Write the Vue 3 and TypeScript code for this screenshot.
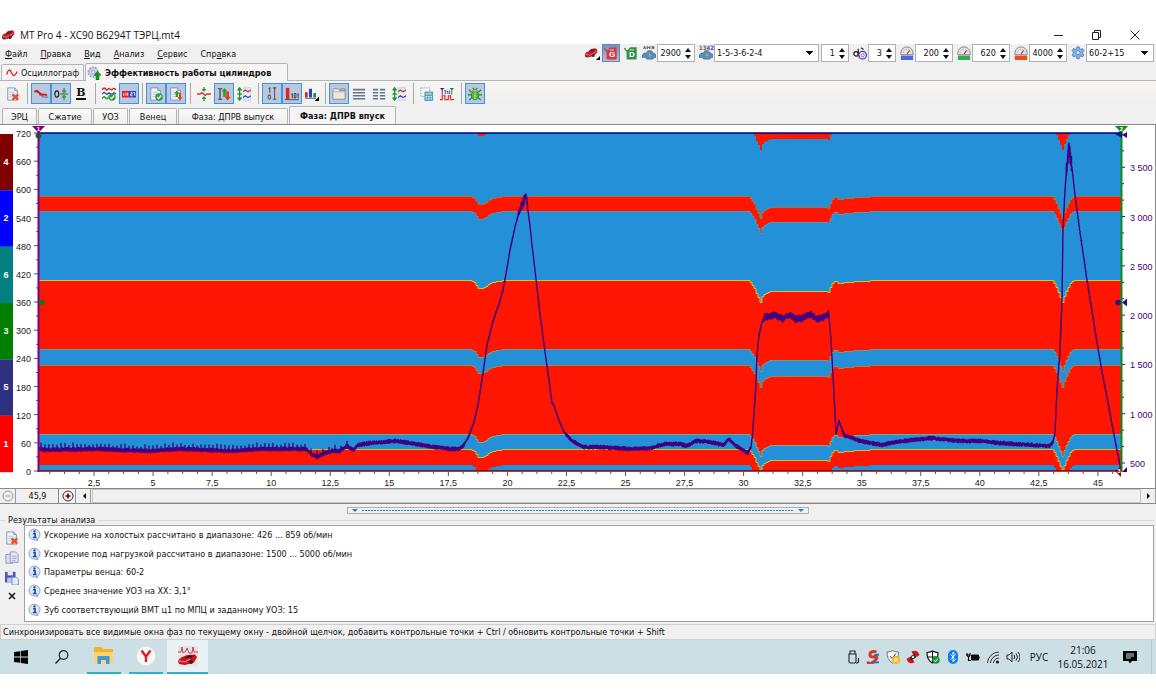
<script setup lang="ts">
import { ref } from 'vue'

type Tool = { icon: string; on?: boolean; label: string }

const menu = [
  ['', 'Ф', 'айл'],
  ['', 'П', 'равка'],
  ['', 'В', 'ид'],
  ['', 'А', 'нализ'],
  ['', 'С', 'ервис'],
  ['Спр', 'а', 'вка'],
]

const toolGroups: Tool[][] = [
  [{ icon: 'pagex', label: 'Удалить' }],
  [
    { icon: 'wave', on: true, label: 'Сигнал' },
    { icon: 'zero', on: true, label: 'Ноль' },
    { icon: 'bold', label: 'Жирный' },
  ],
  [
    { icon: 'waves', label: 'Сигналы' },
    { icon: 'digits', on: true, label: 'Номера' },
  ],
  [
    { icon: 'pageok', on: true, label: 'Проверить' },
    { icon: 'pageud', on: true, label: 'Обновить' },
  ],
  [
    { icon: 'fit', label: 'Вписать' },
    { icon: 'range', on: true, label: 'Диапазон' },
    { icon: 'scale', label: 'Масштаб' },
  ],
  [
    { icon: 'binary', on: true, label: 'Фазы' },
    { icon: 'barnum', on: true, label: 'Значения' },
    { icon: 'bars', label: 'Диаграмма' },
  ],
  [
    { icon: 'tab', on: true, label: 'Вкладки' },
    { icon: 'rows', label: 'Строки' },
    { icon: 'cols', label: 'Столбцы' },
    { icon: 'scale', label: 'Высота' },
  ],
  [
    { icon: 'calc', label: 'Расчёт' },
    { icon: 'pulse', label: 'Импульсы' },
  ],
  [{ icon: 'bug', on: true, label: 'Отладка' }],
]

const rpm = ref('2900')
const order = ref('1-5-3-6-2-4')
const first = ref('1')
const third = ref('3')
const low = ref('200')
const idle = ref('620')
const high = ref('4000')
const wheel = ref('60-2+15')

const phaseTabs = ['ЭРЦ', 'Сжатие', 'УОЗ', 'Венец', 'Фаза: ДПРВ выпуск', 'Фаза: ДПРВ впуск']

const results = [
  'Ускорение на холостых рассчитано в диапазоне: 426 ... 859 об/мин',
  'Ускорение под нагрузкой рассчитано в диапазоне: 1500 ... 5000 об/мин',
  'Параметры венца: 60-2',
  'Среднее значение УОЗ на ХХ: 3,1°',
  'Зуб соответствующий ВМТ ц1 по МПЦ и заданному УОЗ: 15',
]

/* ---------- chart geometry ---------- */
const L = 38
const R = 1121
const T = 133
const B = 471
const cylinders = [
  { n: 4, c: '#800000' },
  { n: 2, c: '#0000ff' },
  { n: 6, c: '#008080' },
  { n: 3, c: '#008000' },
  { n: 5, c: '#303080' },
  { n: 1, c: '#ff0000' },
].map((c, i) => ({ ...c, y: T + 1 + (i * (B - T)) / 6 }))

const degY = (d: number) => B - (d * (B - T)) / 720
const degTicks = Array.from({ length: 25 }, (_, i) => ({ v: i * 30, y: degY(i * 30), major: i % 2 === 0 }))
const timeX = (t: number) => 35 + t * 23.62
const timeTicks = Array.from({ length: 73 }, (_, i) => ({
  x: timeX((i + 1) * 0.625),
  major: (i + 1) % 4 === 0,
  text: String(((i + 1) * 0.625).toFixed(1)).replace('.0', '').replace('.', ','),
}))
const rpmTicks = Array.from({ length: 21 }, (_, i) => ({
  y: 463 - i * 16.43,
  major: i % 3 === 0,
  text: String(500 + (i / 3) * 500).replace(/(\d)(\d{3})$/, '$1 $2'),
}))

type P = [number, number]
function lerp(pts: P[], x: number): number {
  if (x <= pts[0][0]) return pts[0][1]
  for (let i = 1; i < pts.length; i++) {
    if (x <= pts[i][0]) {
      const [x0, y0] = pts[i - 1]
      const [x1, y1] = pts[i]
      return y0 + ((y1 - y0) * (x - x0)) / (x1 - x0)
    }
  }
  return pts[pts.length - 1][1]
}

const shift: P[] = [
  [38, 0], [471, 0], [475, 3], [478, 8], [483, 7.5], [487, 5], [492, 2], [497, 1], [504, 0],
  [749, 0], [751, 4], [753.5, 7], [755.5, 12], [758, 17], [760, 21.5], [762, 16], [764, 13.5], [767, 12], [771, 11],
  [828, 11.5], [829.5, 8], [831, 4], [833.5, 1], [836, 0.5], [838, 3], [842, 3], [844, 1.7], [852, 1.5], [867, 0.6], [880, 0],
  [1052, 0], [1054, 3], [1056, 7], [1058, 12], [1060, 17], [1062, 21.5], [1064, 16], [1067, 9], [1070, 3], [1073, 0],
  [1121, 0],
]
const steps: P[] = []
for (let x = L; x < R; x += 2) steps.push([x, Math.round(lerp(shift, x))])

function edge(base: number): string[] {
  const out: string[] = []
  for (const [x, d] of steps) {
    out.push(`${x},${base + d}`, `${Math.min(x + 2, R)},${base + d}`)
  }
  return out
}
const bandPath = (a: number, b: number) => `M${edge(a).join('L')}L${edge(b).reverse().join('L')}Z`
const bands = [
  bandPath(90, 128),
  bandPath(197, 211),
  bandPath(281, 350),
  bandPath(365, 434),
  bandPath(450, 465),
]
const rims = [
  { y: 196.5, c: '#a8743e' },
  { y: 211.5, c: '#5a94b0' },
  { y: 280.5, c: '#c2cf2a' },
  { y: 349.5, c: '#6d9a8c' },
  { y: 365.5, c: '#b87a3a' },
  { y: 434.5, c: '#6fb08c' },
  { y: 449.5, c: '#c9c22c' },
].map((r) => ({ c: r.c, d: `M${edge(r.y).join('L')}` }))

const speed: P[] = [
  [38, 448], [45, 450], [100, 449], [120, 450], [150, 451], [180, 449], [230, 451], [260, 449], [306, 449], [311, 454],
  [317, 457], [325, 453], [332, 451], [340, 451], [347, 446], [353, 450], [358, 445], [370, 443], [396, 441], [410, 443],
  [434, 447], [450, 449], [459, 449], [463, 446], [468, 438], [474, 422], [478, 405], [483, 373], [487, 345], [493, 321],
  [499, 304], [503, 290], [507, 268], [510, 250], [515, 227], [519, 212], [522, 205], [526, 195], [527, 203], [530, 226],
  [532, 245], [536, 279], [540, 314], [545, 352], [549, 380], [552, 403], [554, 405], [558, 418], [564, 432], [571, 440],
  [583, 447], [600, 447], [630, 449], [650, 448], [665, 444], [680, 444], [687, 446], [696, 441], [710, 442], [723, 445],
  [729, 439], [736, 446], [748, 453], [751, 447], [752.5, 435], [755.5, 392], [757, 355], [759, 335], [762, 322], [765, 317],
  [776, 315], [783, 319], [789, 315], [796, 319], [803, 318], [810, 314], [817, 319], [827, 316], [828.5, 311], [831, 340],
  [833, 375], [836, 433], [839, 421], [844, 435], [860, 441], [882, 445], [895, 442], [930, 438], [960, 441], [980, 441],
  [1000, 443], [1049, 446], [1053, 442], [1055, 432], [1057, 390], [1060, 350], [1062, 300], [1063, 230], [1065, 190],
  [1067, 164], [1069, 148], [1072, 168], [1075, 195], [1080, 232], [1087, 280], [1095, 330], [1102, 372], [1109, 408],
  [1115, 440], [1121, 470],
]
let seed = 7
const rnd = () => {
  seed = (seed * 16807) % 2147483647
  return seed / 2147483647 - 0.5
}
function amp(x: number): number {
  if (x > 764 && x < 828) return 3
  if (x > 1066 && x < 1072) return 7
  if (x > 518 && x < 528) return 4
  if ((x > 464 && x < 566) || (x > 750 && x < 764) || (x >= 828 && x < 842)) return 0.8
  if (x > 1054) return 1.5
  return 1.6
}
/* every half-pixel column is drawn as a short vertical sweep, which gives the trace its thickness */
const curvePts: string[] = []
for (let x = 39; x <= R; x += 0.5) {
  const k = Math.round((x - 39) * 2)
  const y = lerp(speed, x)
  const a = amp(x)
  const up = y - a * (0.7 + rnd())
  const down = y + a * (0.7 + rnd())
  curvePts.push(`${x},${up.toFixed(1)}`, `${x},${down.toFixed(1)}`)
  if ((x < 308 && k % 8 === 4) || (x > 308 && x < 350 && k % 12 === 4)) {
    curvePts.push(`${x},${(y - 5 - rnd() * 3).toFixed(1)}`, `${x},${y.toFixed(1)}`)
  }
}
const curve = 'M' + curvePts.join('L')
</script>

<template>
  <svg class="defs" aria-hidden="true">
    <symbol id="i-car" viewBox="0 0 16 16">
      <path d="M1 9.500l1.500-2.500 3-1L8 3.500l5-.8 2 1.300.3 3-3.800 4.500L4 13 1 12z" fill="#c4202a" />
      <path d="M5 6.500L8 4l4.500-.6-2 2.800z" fill="#57222c" />
      <path d="M1.500 9.500l5 1 3.500-2 4.500-2.500" fill="none" stroke="#f08a88" stroke-width=".8" />
      <circle cx="10.500" cy="11" r="1.600" fill="#333" /><circle cx="3" cy="12" r="1.100" fill="#444" />
    </symbol>
    <symbol id="i-sine" viewBox="0 0 16 16"><path d="M1 10C3 3 5 2 7 7s4 7 8-1" fill="none" stroke="#e01818" stroke-width="1.700" /></symbol>
    <symbol id="i-gearup" viewBox="0 0 16 16">
      <circle cx="7" cy="7" r="5.300" fill="#b8c0e0" stroke="#9aa2cc" stroke-width="2.400" stroke-dasharray="2 1.300" />
      <circle cx="7" cy="7" r="4.400" fill="#c8cfea" /><circle cx="7" cy="7" r="1.800" fill="#f2f2f8" stroke="#8088b8" stroke-width=".7" />
      <path d="M12 6l4 4.500h-2.300V16h-3.400v-5.500H8z" fill="#189a20" stroke="#0a6010" stroke-width=".6" />
    </symbol>
    <symbol id="i-page" viewBox="0 0 16 16">
      <path d="M2 1h8l3 3v11H2z" fill="#eef3fa" stroke="#7c8fb0" /><path d="M10 1v3h3" fill="#c8d6ea" stroke="#7c8fb0" />
      <path d="M4 6h6M4 8.500h6M4 11h4" stroke="#b4c4dc" />
    </symbol>
    <symbol id="i-pagex" viewBox="0 0 16 16">
      <use href="#i-page" /><path d="M7.500 8.500l6.500 6M14 8.500l-6.500 6" stroke="#e8502c" stroke-width="2.800" />
    </symbol>
    <symbol id="i-pageok" viewBox="0 0 16 16">
      <use href="#i-page" /><circle cx="11.500" cy="11.500" r="4.300" fill="#2ba23a" /><path d="M9.300 11.500l1.700 1.800 3-3.600" fill="none" stroke="#fff" stroke-width="1.400" />
    </symbol>
    <symbol id="i-pageud" viewBox="0 0 16 16">
      <use href="#i-page" /><path d="M9 4l3 3.500h-1.700v4H7.700v-4H6z" fill="#23a030" /><path d="M12.500 15.500l3-3.700h-1.800V6.500h-2.500v5.300H9.500z" fill="#e83c1c" />
    </symbol>
    <symbol id="i-wave" viewBox="0 0 16 16">
      <path d="M0 4.500h3.500v2h3v3h3v2H16" fill="none" stroke="#555" stroke-width=".9" /><path d="M1 6q2-3 4-.5t3.500 3 6.500.5" fill="none" stroke="#d81414" stroke-width="2" />
    </symbol>
    <symbol id="i-zero" viewBox="0 0 16 16">
      <ellipse cx="3.200" cy="8" rx="2.200" ry="3.600" fill="none" stroke="#222" stroke-width="1.300" />
      <path d="M7 8h9" stroke="#444" /><path d="M11.500 1v5M11.500 10v5M9.500 4l2 2.300 2-2.300M9.500 12l2-2.300 2 2.300" fill="none" stroke="#2c9c3c" stroke-width="1.400" />
    </symbol>
    <symbol id="i-waves" viewBox="0 0 16 16">
      <path d="M0 3l2.500-2 3 2.500L8 1.500l3 2 2.500-2 2.500 1.500" fill="none" stroke="#d42020" stroke-width="1.500" /><path d="M0 8l2.500-2 3 2.500L8 6.500l3 2 2.500-2 2.500 1.500" fill="none" stroke="#3048d0" stroke-width="1.500" />
      <path d="M0 13l2.500-2 3 2.500L8 11.500" fill="none" stroke="#23a030" stroke-width="1.500" /><circle cx="11.500" cy="11.500" r="4.200" fill="#2ba23a" /><path d="M9.300 11.500l1.700 1.800 3-3.600" fill="none" stroke="#fff" stroke-width="1.400" />
    </symbol>
    <symbol id="i-digits" viewBox="0 0 16 16">
      <rect y="4.500" width="8" height="7.500" fill="#e02424" /><rect x="8" y="4.500" width="8" height="7.500" fill="#2a44d8" />
      <path d="M2 7v3M4.500 6.500v3.500M6.500 6.500v3.500M10 6.500h1.500v1.500H10V10h2M13 6.500h1.500V10" fill="none" stroke="#fff" />
    </symbol>
    <symbol id="i-fit" viewBox="0 0 16 16">
      <path d="M0 8h3.500l2-1.500 4 3 2-1.500H16" fill="none" stroke="#d83030" stroke-width="1.500" /><path d="M8 0v4M8 12v4M6 2.500l2 2 2-2M6 13.500l2-2 2 2" fill="none" stroke="#259a36" stroke-width="1.500" />
    </symbol>
    <symbol id="i-range" viewBox="0 0 16 16">
      <path d="M1 2h5M3.500 2v12M1 14h5" stroke="#444" stroke-width="1.400" /><path d="M8.500 1l3.500 4h-2v6H7V5H5z" fill="#23a030" /><path d="M12 15.500l3.700-4.500h-2V5h-3.200v6h-2z" fill="#e83c1c" />
    </symbol>
    <symbol id="i-scale" viewBox="0 0 16 16">
      <path d="M3 1v14M.8 4L3 1l2.200 3M.8 12L3 15l2.200-3M.5 8h5" fill="none" stroke="#1c9430" stroke-width="1.600" />
      <rect x="7" y="1" width="9" height="14" fill="#e4ecf8" stroke="#a8b4cc" stroke-width=".6" /><path d="M7 5.500l2.500-2 3 2L16 3.500" fill="none" stroke="#d82828" stroke-width="1.400" />
      <path d="M7 12l2.500-2 3 2 3.500-2" fill="none" stroke="#2c50d0" stroke-width="1.400" />
    </symbol>
    <symbol id="i-binary" viewBox="0 0 16 16">
      <path d="M4 2l1.500-1v5.500M9 1h4M11 1v13M9 14h4" fill="none" stroke="#555" stroke-width="1.200" /><ellipse cx="5" cy="11.500" rx="1.500" ry="2.500" fill="none" stroke="#555" stroke-width="1.200" />
    </symbol>
    <symbol id="i-barnum" viewBox="0 0 16 16">
      <rect x="1" y="1" width="4" height="13" fill="#e82020" /><path d="M0 14.500h16" stroke="#444" /><path d="M7 8.500l1.300-1v5.500M10.500 7.500h2v5h-2zM14 8.500l1-1v5.500" fill="none" stroke="#333" />
    </symbol>
    <symbol id="i-bars" viewBox="0 0 16 16">
      <path d="M0 6h3v6H0z" fill="#d42020" /><path d="M4.500 2h3.500v10H4.500z" fill="#2440e0" /><path d="M9.500 7h3v5h-3z" fill="#208c28" /><path d="M0 13h13" stroke="#666" /><path d="M16 11v5h-5z" fill="#000" />
    </symbol>
    <symbol id="i-tab" viewBox="0 0 16 16"><path d="M1 14V4q0-2 2-2h4l1.500 2H15v10z" fill="#ece8e0" stroke="#888" /><path d="M9.500 3.500V2H15v2" fill="none" stroke="#888" /><path d="M1.500 5.500h13" stroke="#aaa" /></symbol>
    <symbol id="i-rows" viewBox="0 0 16 16"><path d="M1 3h14M1 6.500h14M1 10h14M1 13.500h14" stroke="#68748a" stroke-width="1.800" /></symbol>
    <symbol id="i-cols" viewBox="0 0 16 16"><path d="M1 3h6M1 6.500h6M1 10h6M1 13.500h6M9 3h6M9 6.500h6M9 10h6M9 13.500h6" stroke="#68748a" stroke-width="1.800" /></symbol>
    <symbol id="i-calc" viewBox="0 0 16 16">
      <rect x="1" y="1" width="10" height="10" fill="none" stroke="#7c90b4" stroke-dasharray="1.500 1.500" /><rect x="5" y="5" width="10" height="11" rx="1" fill="#5aa0c8" /><rect x="6.500" y="6.500" width="7" height="2.500" fill="#9ad08c" />
      <path d="M6.500 11h7M6.500 13.500h7" stroke="#e6f2fa" stroke-width="1.400" stroke-dasharray="1.700 1" />
    </symbol>
    <symbol id="i-pulse" viewBox="0 0 16 16">
      <path d="M0 1h5L2.500 4z" fill="#800080" /><path d="M2.500 3v6" stroke="#800080" /><path d="M11 1h5l-2.500 3z" fill="#108a20" /><path d="M13.500 3v6" stroke="#108a20" />
      <path d="M5 4.500l1-1v5M7.500 5h1.500v3M11 4v4" fill="none" stroke="#2838c0" /><path d="M0 14.500h2.500V10h3v4.500h4V10h2.500v4.500H16" fill="none" stroke="#e82828" stroke-width="1.400" />
    </symbol>
    <symbol id="i-bug" viewBox="0 0 16 16">
      <path d="M1 3l3 3M15 3l-3 3M0 9h16M1.500 15L5 11.500M14.500 15L11 11.500M5.500 1l1.500 2.500M10.500 1L9 3.500" stroke="#26802c" stroke-width="1.300" />
      <ellipse cx="8" cy="9.500" rx="4" ry="5" fill="#58b848" stroke="#26802c" /><ellipse cx="8" cy="4.300" rx="2.500" ry="1.700" fill="#d8c850" stroke="#26802c" stroke-width=".8" /><path d="M8 6v8" stroke="#c8e880" />
    </symbol>
    <symbol id="i-can" viewBox="0 0 16 16">
      <path d="M3 6l4-4.500h7.500V14q0 1.500-1.500 1.500H4.500Q3 15.500 3 14z" fill="currentColor" /><path d="M.5 2.500l3 3.500" fill="none" stroke="currentColor" stroke-width="1.500" /><path d="M6.500 4.500h5" stroke="#fff" stroke-width=".9" />
    </symbol>
    <symbol id="i-engine" viewBox="0 0 16 16">
      <path d="M0 10h2V8h2.500l2-2h5l1 2H14v1.500h2V13h-2l-1.500 2h-7L3.500 13H0z" fill="#4f8fca" stroke="#2c6296" stroke-width=".6" /><path d="M6 5.500h5" stroke="#777" /><path d="M9 7.500L7.500 11h1.500L8 14l3-4H9.500z" fill="#f2a420" />
    </symbol>
    <symbol id="i-tag" viewBox="0 0 16 16"><path d="M2 3.500l1-3 1 3M6 3.500v-3L7.500 2 9 .5v3M11.500 .5v3M11.500 1h2M13.500 .5v3" fill="none" stroke="#333" /></symbol>
    <symbol id="i-cam" viewBox="0 0 16 16">
      <circle cx="3.500" cy="9" r="2.500" fill="none" stroke="#222" stroke-width="1.400" /><path d="M6 3v9M9 2l3 2" stroke="#222" stroke-width="1.400" /><circle cx="11" cy="10.500" r="4.300" fill="#fff" stroke="#3438e8" stroke-width="1.500" /><circle cx="11" cy="10.500" r="1.800" fill="none" stroke="#e03030" />
    </symbol>
    <symbol id="i-gauge" viewBox="0 0 16 16">
      <path d="M1 10V8a7 7 0 0 1 14 0v2z" fill="#e8e8e8" stroke="#777" /><path d="M3.500 8a4.500 4.500 0 0 1 9 0" fill="none" stroke="#999" stroke-dasharray="1 1" /><path d="M8 9l3-4" stroke="#d82828" stroke-width="1.200" /><rect x="1" y="11" width="14" height="5" fill="currentColor" />
    </symbol>
    <symbol id="i-gear" viewBox="0 0 16 16">
      <path d="M6.700 1h2.600l.5 2 1.400.8 2-.9 1.600 2.200-1.300 1.700v1.700l1.300 1.700-1.600 2.200-2-.9-1.400.8-.5 2.200H6.700l-.5-2.200-1.400-.8-2 .9-1.600-2.200 1.300-1.700V6.800L1.200 5.100l1.600-2.200 2 .9L6.200 3z" fill="#86b2e4" stroke="#4a7cc0" /><circle cx="8" cy="7.700" r="2.300" fill="#f2f4f8" stroke="#4a7cc0" />
    </symbol>
    <symbol id="i-info" viewBox="0 0 16 16">
      <path d="M9 14l3 2 .5-4z" fill="#8a9cb8" /><circle cx="8" cy="7.500" r="6.800" fill="#dbe8f8" stroke="#7a90b4" /><path d="M6.300 6.500h2.400v4.500M6 11h4.500" fill="none" stroke="#1a45a8" stroke-width="1.900" /><circle cx="8" cy="3.700" r="1.400" fill="#1a45a8" />
    </symbol>
    <symbol id="i-copy" viewBox="0 0 16 16">
      <path d="M1 4h6l2 2v8H1z" fill="#d8def0" stroke="#8890b8" /><path d="M6 1h6l3 3v9H6z" fill="#e4e8f6" stroke="#8890b8" /><path d="M8 6h5M8 8.500h5M8 11h4" stroke="#98a0c8" />
    </symbol>
    <symbol id="i-save" viewBox="0 0 16 16">
      <path d="M0 1h12v12H0z" fill="#4a58b8" /><path d="M3 1h6v4H3z" fill="#e8ecf8" /><path d="M2.500 7.500h7V13h-7z" fill="#b8c4ec" /><path d="M8 7h5l2.500 2.500V16H8z" fill="#e0ecf8" stroke="#7088b0" />
    </symbol>
    <symbol id="i-folder" viewBox="0 0 20 18">
      <path d="M0 1q0-1 1-1h6l2 2h10v14H0z" fill="#f2b32c" /><path d="M0 5h19v11H0z" fill="#fcd468" /><path d="M3.500 17V9h12v8h-3.500v-4H7v4z" fill="#3d98dc" />
    </symbol>
  </svg>

  <div class="window">
    <header class="title">
      <svg class="ico"><use href="#i-car" /></svg>
      <h1>MT Pro 4 - XC90 B6294T ТЭРЦ.mt4</h1>
      <div class="winbtns">
        <button type="button" aria-label="Свернуть"><svg viewBox="0 0 10 10"><path d="M0 5.500h9" /></svg></button>
        <button type="button" aria-label="Развернуть"><svg viewBox="0 0 10 10"><path d="M.5 2.500h6v7h-6zM2.500 2.500v-2h6v7h-2" /></svg></button>
        <button type="button" aria-label="Закрыть"><svg viewBox="0 0 10 10"><path d="M.5 .5l9 9M9.500 .5l-9 9" /></svg></button>
      </div>
    </header>

    <div class="menurow">
      <nav class="menu">
        <button v-for="m in menu" :key="m[1]" type="button">{{ m[0] }}<u>{{ m[1] }}</u>{{ m[2] }}</button>
      </nav>
      <div class="params">
        <button type="button" class="pbtn" aria-label="Автомобиль">
          <svg class="ico"><use href="#i-car" /></svg><svg class="corner" viewBox="0 0 4 4"><path d="M4 0v4H0z" /></svg>
        </button>
        <button type="button" class="pbtn gas on" aria-label="Бензин"><svg class="ico"><use href="#i-can" /></svg><b>G</b></button>
        <button type="button" class="pbtn diesel" aria-label="Дизель"><svg class="ico"><use href="#i-can" /></svg><b>D</b></button>
        <label class="field tight">
          <svg class="ico"><use href="#i-engine" /><use href="#i-tag" /></svg>
          <span class="spin w38"><input v-model="rpm" aria-label="Обороты" /><span class="ud"><button type="button" aria-label="Больше" /><button type="button" aria-label="Меньше" /></span></span>
        </label>
        <label class="field">
          <span class="stack"><i><em>1</em><em>3</em><em>4</em><em>2</em></i><svg class="ico"><use href="#i-engine" /></svg></span>
          <select v-model="order" class="w105" aria-label="Порядок работы"><option>1-5-3-6-2-4</option></select>
        </label>
        <span class="spin w28"><input v-model="first" aria-label="Цилиндр" /><span class="ud"><button type="button" aria-label="Больше" /><button type="button" aria-label="Меньше" /></span></span>
        <label class="field">
          <svg class="ico"><use href="#i-cam" /></svg>
          <span class="spin w28"><input v-model="third" aria-label="Датчик" /><span class="ud"><button type="button" aria-label="Больше" /><button type="button" aria-label="Меньше" /></span></span>
        </label>
        <label class="field blue">
          <svg class="ico"><use href="#i-gauge" /></svg>
          <span class="spin w38"><input v-model="low" aria-label="Минимум" /><span class="ud"><button type="button" aria-label="Больше" /><button type="button" aria-label="Меньше" /></span></span>
        </label>
        <label class="field green">
          <svg class="ico"><use href="#i-gauge" /></svg>
          <span class="spin w38"><input v-model="idle" aria-label="Холостой ход" /><span class="ud"><button type="button" aria-label="Больше" /><button type="button" aria-label="Меньше" /></span></span>
        </label>
        <label class="field red">
          <svg class="ico"><use href="#i-gauge" /></svg>
          <span class="spin w38"><input v-model="high" aria-label="Максимум" /><span class="ud"><button type="button" aria-label="Больше" /><button type="button" aria-label="Меньше" /></span></span>
        </label>
        <label class="field">
          <svg class="ico"><use href="#i-gear" /></svg>
          <select v-model="wheel" class="w68" aria-label="Венец"><option>60-2+15</option></select>
        </label>
      </div>
    </div>

    <div class="maintabs">
      <button type="button"><svg class="ico"><use href="#i-sine" /></svg>Осциллограф</button>
      <button type="button" class="active"><svg class="ico"><use href="#i-gearup" /></svg>Эффективность работы цилиндров</button>
    </div>

    <div class="toolbar">
      <div v-for="(g, gi) in toolGroups" :key="gi" class="group">
        <button v-for="(t, ti) in g" :key="ti" type="button" :class="{ on: t.on }" :aria-label="t.label">
          <b v-if="t.icon === 'bold'">B</b>
          <svg v-else class="ico"><use :href="'#i-' + t.icon" /></svg>
        </button>
      </div>
    </div>

    <div class="phasetabs">
      <button v-for="(p, i) in phaseTabs" :key="p" type="button" :class="{ active: i === 5 }">{{ p }}</button>
    </div>

    <svg class="chart" viewBox="0 125 1156 363" role="img" aria-label="Фаза: ДПРВ впуск">
      <defs><clipPath id="plot"><rect :x="L" :y="T" :width="R - L" :height="B - T" /></clipPath></defs>
      <rect x="0" y="125" width="1156" height="363" fill="#fff" />
      <path d="M1155.500 125v363" stroke="#888" />
      <g v-for="c in cylinders" :key="c.n">
        <rect x="0" :y="c.y" width="13" height="56.500" :fill="c.c" />
        <text class="cyl" x="6" :y="c.y + 31">{{ c.n }}</text>
      </g>
      <g v-for="t in degTicks" :key="t.v">
        <path class="tick" :d="`M${t.major ? 34 : 36} ${t.y}H38`" />
        <text v-if="t.major" class="axis end" x="31" :y="t.y + 4">{{ t.v }}</text>
      </g>
      <g v-for="t in timeTicks" :key="t.x">
        <path class="tick" :d="`M${t.x} 472v${t.major ? 4 : 2}`" />
        <text v-if="t.major" class="axis mid" :x="t.x" y="486">{{ t.text }}</text>
      </g>
      <g v-for="t in rpmTicks" :key="t.y">
        <path class="rtick" :d="`M1121 ${t.y}h${t.major ? 4 : 3}`" />
        <text v-if="t.major" class="axis rpm" x="1130" :y="t.y + 4">{{ t.text }}</text>
      </g>
      <g clip-path="url(#plot)">
        <rect :x="L" :y="T" :width="R - L" :height="B - T" fill="#2490d8" />
        <path v-for="(b, i) in bands" :key="i" :d="b" fill="#ff1600" />
        <path v-for="r in rims" :key="r.c" :d="r.d" :stroke="r.c" fill="none" />
        <path :d="curve" fill="none" stroke="#400080" stroke-width="1.400" stroke-linejoin="round" />
      </g>
      <path d="M38 133h1083" stroke="#000080" stroke-width="1.500" />
      <path d="M38 471h1083" stroke="#800000" stroke-width="1.500" />
      <circle cx="38.500" cy="135.500" r="3" fill="#0c7a1c" />
      <path d="M38.500 130v342" stroke="#800080" stroke-width="2" />
      <path d="M32 126h13l-6.500 7z" fill="#800080" /><text class="mark" x="38.500" y="131">1</text>
      <circle cx="42" cy="302.500" r="2.800" fill="#0c7a1c" />
      <path d="M1121.500 130v342" stroke="#108a20" stroke-width="2" />
      <path d="M1115 134l7-4v8z" fill="#14148c" /><path d="M1122 135l5-3v6z" fill="#400080" />
      <path d="M1115 126h13l-6.500 7z" fill="#108a10" /><text class="mark" x="1121.500" y="131">2</text>
      <circle cx="1118" cy="302.500" r="2.800" fill="#2c1480" /><path d="M1122 302.500l5-4v8z" fill="#2c1480" />
      <path d="M1115 471l6-5v11z" fill="#8c0808" /><text class="mark" x="1119" y="473">3</text><path d="M1122 472l5-5v5z" fill="#400080" />
    </svg>

    <div class="scrollrow">
      <button type="button" class="sb" aria-label="Уменьшить"><svg viewBox="0 0 12 12"><circle cx="6" cy="6" r="5" fill="none" stroke="#999" /><path d="M3.500 6h5" stroke="#999" /></svg></button>
      <output>45,9</output>
      <button type="button" class="sb" aria-label="Увеличить"><svg viewBox="0 0 12 12"><circle cx="6" cy="6" r="5" fill="none" stroke="#333" /><path d="M3.500 6h5M6 3.500v5" stroke="#8c0000" stroke-width="1.700" /></svg></button>
      <button type="button" class="sb arrow" aria-label="Влево"><svg viewBox="0 0 8 8"><path d="M6 1v6L3 4z" /></svg></button>
      <div class="track"></div>
      <button type="button" class="sb arrow" aria-label="Вправо"><svg viewBox="0 0 8 8"><path d="M2 1v6l3-3z" /></svg></button>
    </div>

    <div class="splitter">
      <div class="grip"><i></i><span></span><i></i></div>
    </div>

    <section class="results">
      <h2>Результаты анализа</h2>
      <div class="resbody">
        <div class="side">
          <button type="button" aria-label="Очистить"><svg class="ico"><use href="#i-pagex" /></svg></button>
          <button type="button" aria-label="Копировать"><svg class="ico"><use href="#i-copy" /></svg></button>
          <button type="button" aria-label="Сохранить"><svg class="ico"><use href="#i-save" /></svg></button>
          <button type="button" aria-label="Закрыть"><svg class="x" viewBox="0 0 8 8"><path d="M1 1l6 6M7 1L1 7" stroke="#111" stroke-width="1.500" /></svg></button>
        </div>
        <ul>
          <li v-for="r in results" :key="r"><svg class="ico"><use href="#i-info" /></svg>{{ r }}</li>
        </ul>
      </div>
    </section>

    <p class="status">Синхронизировать все видимые окна фаз по текущему окну - двойной щелчок, добавить контрольные точки + Ctrl / обновить контрольные точки + Shift</p>

    <footer class="taskbar">
      <button type="button" class="tb plain" aria-label="Пуск"><svg class="s14" viewBox="0 0 14 14"><path d="M0 2l6-.8v5.400H0zM6.700 1.100L14 0v6.600H6.700zM0 7.400h6v5.400L0 12zM6.700 7.400H14V14l-7.300-1.100z" /></svg></button>
      <button type="button" class="tb plain" aria-label="Поиск"><svg class="s14" viewBox="0 0 14 14"><circle cx="8.500" cy="5" r="4.300" fill="none" stroke="#222" stroke-width="1.200" /><path d="M5.500 8.200L.5 13.500" stroke="#222" stroke-width="1.400" /></svg></button>
      <button type="button" class="tb run" aria-label="Проводник"><svg class="fold" viewBox="0 0 20 18"><use href="#i-folder" /></svg></button>
      <button type="button" class="tb run" aria-label="Яндекс"><svg class="s20" viewBox="0 0 20 20"><circle cx="10" cy="10" r="9.500" fill="#f8f8f8" stroke="#ddd" stroke-width=".6" /><path d="M5.500 4.500l4.500 6 4.500-6M10 10v6" fill="none" stroke="#e01a20" stroke-width="2.400" /></svg></button>
      <button type="button" class="tb run current" aria-label="MT Pro 4">
        <svg class="s20" viewBox="0 0 20 20"><rect width="20" height="20" fill="#eadfe2" /><path d="M0 6h3l1-5 1 6 3-2 1-3 2 5 3 0 1-6 1 5h4" fill="none" stroke="#b83848" stroke-width=".9" /><path d="M0 15l3-3.500 6-2.500 8-.5 2 2.500-3 5.500-9 2.500-6-1z" fill="#c8141e" /><path d="M6 11.500l5-2 5 0-3 2.500z" fill="#4a1018" /><path d="M1 15l6 1 5-3" fill="none" stroke="#ff9a98" /><circle cx="13" cy="16" r="2" fill="#222" /></svg>
      </button>
      <div class="tray">
        <svg viewBox="0 0 14 14"><path d="M4 1h5v3H4zM3 4h7v7.500q0 1.500-1.500 1.500h-4Q3 13 3 11.500zM12.500 8v4l-2 1.500" fill="none" stroke="#222" stroke-width="1.100" /></svg>
        <svg viewBox="0 0 14 14"><path d="M10.500 2Q4.500 .5 4 4t4.500 3-.5 4.500-6 0" fill="none" stroke="#d83820" stroke-width="3" /><path d="M8 5.500l5-1M5 12.300h8" stroke="#2c68b8" stroke-width="1.800" /></svg>
        <svg viewBox="0 0 14 14"><path d="M1 2q3 0 5.500-1.500Q9 2 12.500 2 13 9 6.500 13 1 10 1 2z" fill="#f4f4f4" stroke="#777" /><path d="M4 6l2 2.500 4-5" fill="none" stroke="#555" /><circle cx="10" cy="10" r="4" fill="#f6b420" /><path d="M8.800 8.200v3.600M11.200 8.200v3.600" stroke="#fff" stroke-width="1.200" /></svg>
        <svg viewBox="0 0 14 14"><path d="M5.500 1.500q6-2.500 8 3.500l-2.800 2q-1-3-4-3zM8.500 12.500q-6 2.500-8-3.500L3.300 7q1 3 4 3z" fill="#d8101c" /><path d="M3.500 7.500l5-4 2 3.500-5 3.500z" fill="#222" /><circle cx="7" cy="7" r="1.300" fill="#ddd" /></svg>
        <svg viewBox="0 0 14 14"><path d="M1 2.500Q4 2.500 6.500 1 9 2.500 12 2.500 12.500 10 6.500 13 .8 10 1 2.500z" fill="#fff" stroke="#111" stroke-width="1.200" /><path d="M6.500 1v12M1 7h11" stroke="#111" /><circle cx="10" cy="10" r="3.800" fill="#16963c" /><path d="M8.200 10l1.300 1.500 2.300-2.800" fill="none" stroke="#fff" /></svg>
        <svg viewBox="0 0 14 14"><rect x="2" width="10" height="14" rx="5" fill="#0a7cf0" /><path d="M4.500 4.500l5 5L7 12V2l2.500 2.500-5 5" fill="none" stroke="#fff" /></svg>
        <svg viewBox="0 0 14 14"><path d="M5.500 5h7v5h-7z" fill="#111" stroke="#111" /><path d="M14 6.500v2M0 5h4M1 3v2.500l1.500 1.500 1.500-1.500V3M2.500 7v3.500H5" fill="none" stroke="#111" stroke-width="1.200" /></svg>
        <svg viewBox="0 0 14 14"><path d="M1.500 13A11.500 11.500 0 0 1 13 2M4.500 13A8.500 8.500 0 0 1 13 5M7.500 13A5.500 5.500 0 0 1 13 8" fill="none" stroke="#333" /><circle cx="11.500" cy="12" r="1.600" fill="#222" /></svg>
        <svg viewBox="0 0 14 14"><path d="M1 5h2l3-3v10L3 9H1zM8 5q1.500 2 0 4M10 3.500q3 3.500 0 7M12 2q4 5 0 10" fill="none" stroke="#222" /></svg>
      </div>
      <span class="lang">РУС</span>
      <div class="clock"><time>21:06</time><time>16.05.2021</time></div>
      <button type="button" class="note" aria-label="Уведомления"><svg class="s14" viewBox="0 0 14 14"><path d="M0 1h14v10H9l-2 2.500L5.500 11H0z" /><path d="M3 4h8M3 6h8M3 8h5" stroke="#d0e0e6" /></svg></button>
    </footer>
  </div>
</template>

<style>
body {
  margin: 0;
  background: #fff;
}
</style>

<style scoped>
* {
  box-sizing: border-box;
}
.defs {
  display: block;
  width: 0;
  height: 0;
}
.window {
  padding-top: 25px;
  font: 9px/12px 'DejaVu Sans Condensed', 'DejaVu Sans', sans-serif;
  color: #111;
}
button,
input,
select {
  font: inherit;
  color: inherit;
  margin: 0;
  padding: 0;
  border: 0;
  background: none;
}
h1,
h2,
p,
ul {
  margin: 0;
  padding: 0;
  font: inherit;
  list-style: none;
}
.ico {
  width: 14px;
  height: 14px;
  flex: none;
  display: block;
}
.title {
  display: flex;
  align-items: center;
  height: 19px;
  padding: 0 2px 0 1px;
  gap: 5px;
}
.title h1 {
  flex: 1;
  font: 10px/14px 'Open Sans', 'Noto Sans', sans-serif;
}
.winbtns {
  display: flex;
}
.winbtns button {
  width: 38px;
  display: flex;
  justify-content: center;
}
.winbtns svg {
  width: 10px;
  height: 10px;
  fill: none;
  stroke: #222;
}
.menurow {
  display: flex;
  justify-content: space-between;
  align-items: flex-start;
  height: 19px;
  background: #f0f0f0;
}
.menu {
  display: flex;
  gap: 13px;
  padding: 4px 0 0 5px;
}
.params {
  display: flex;
  align-items: center;
  gap: 2px;
  padding-right: 2px;
}
.pbtn {
  position: relative;
  width: 18px;
  height: 18px;
  display: flex;
  align-items: center;
  justify-content: center;
}
.pbtn .corner {
  position: absolute;
  right: 0;
  bottom: 2px;
  width: 4px;
  height: 4px;
}
.pbtn b {
  position: absolute;
  left: 6px;
  top: 6px;
  width: 8px;
  text-align: center;
  font: bold 8px/10px 'Liberation Sans', sans-serif;
  color: #fff;
}
.gas {
  color: #cf3a44;
}
.diesel {
  color: #2c9440;
}
.on {
  background: #b9c8de;
  border: 1px solid #3d95e0;
}
.gas.on {
  background: linear-gradient(#7f8fb6, #dcaab2);
}
.gas b {
  left: 5px;
  top: 5px;
}
.field {
  display: flex;
  align-items: center;
  gap: 1px;
  padding-left: 2px;
}
.tight {
  padding: 0;
}
.blue {
  color: #4a68e8;
}
.green {
  color: #36a850;
}
.red {
  color: #ee4a22;
}
.stack {
  position: relative;
}
.stack i {
  position: absolute;
  top: -2px;
  left: 0;
  display: flex;
  font: bold 6px/7px 'DejaVu Sans Condensed', sans-serif;
}
.stack em {
  font-style: normal;
  color: #e02020;
}
.stack em:nth-child(2) {
  color: #188a28;
}
.stack em:nth-child(3) {
  color: #a020a0;
}
.stack em:nth-child(4) {
  color: #2438e0;
}
.spin {
  display: flex;
  height: 18px;
  background: #fff;
  border: 1px solid #b0b0b0;
  color: #111;
}
.spin input {
  flex: 1;
  min-width: 0;
  width: 0;
  text-align: right;
  outline: 0;
}
.ud {
  width: 13px;
  display: flex;
  flex-direction: column;
  align-items: center;
  justify-content: center;
  gap: 3px;
}
.ud button {
  width: 0;
  height: 0;
  border: 3px solid transparent;
  border-top: 0;
  border-bottom: 4px solid #111;
}
.ud button:last-child {
  border-bottom: 0;
  border-top: 4px solid #111;
}
.w28 {
  width: 28px;
}
.w38 {
  width: 38px;
}
.w68 {
  width: 68px;
}
.w105 {
  width: 105px;
}
select {
  appearance: none;
  height: 18px;
  padding-left: 2px;
  border: 1px solid #b0b0b0;
  color: #111;
  background:
    conic-gradient(from -45deg at 50% 100%, #111 90deg, transparent 0) right 5px center / 7px 4px no-repeat,
    #fff;
}
.maintabs {
  display: flex;
  align-items: flex-end;
  gap: 1px;
  height: 18px;
  padding-left: 1px;
  background: #f0f0f0;
  border-bottom: 1px solid #b4b4b4;
}
.maintabs button {
  display: flex;
  align-items: center;
  gap: 3px;
  height: 16px;
  width: 83px;
  padding-left: 4px;
  border: 1px solid #b4b4b4;
  border-bottom: 0;
  border-radius: 2px 2px 0 0;
  background: #f4f4f4;
  white-space: nowrap;
}
.maintabs .ico {
  width: 12px;
  height: 12px;
}
.maintabs .active {
  width: 203px;
  height: 18px;
  margin-bottom: -1px;
  padding-left: 1px;
  gap: 4px;
  font-weight: bold;
  background: #f6f5f3;
}
.maintabs .active .ico {
  width: 14px;
  height: 14px;
}
.toolbar {
  display: flex;
  align-items: center;
  height: 25px;
  padding-left: 3px;
  background: linear-gradient(#f6f5f3, #f0f0f0);
}
.group {
  display: flex;
  padding-right: 4px;
  margin-right: 3px;
  border-right: 1px solid #a8a8a8;
}
.group:nth-child(3n) {
  padding-right: 3px;
}
.group:last-child {
  border: 0;
}
.group button {
  width: 20px;
  height: 21px;
  display: flex;
  align-items: center;
  justify-content: center;
}
.group b {
  font: bold 11px/10px 'DejaVu Serif', serif;
  border-bottom: 2px solid #111;
}
.phasetabs {
  display: flex;
  align-items: flex-end;
  gap: 1px;
  height: 19px;
  padding-left: 2px;
  background: #f0f0f0;
  border-bottom: 1px solid #8a8a8a;
}
.phasetabs button {
  width: 35px;
  height: 16px;
  border: 1px solid #b4b4b4;
  border-bottom: 0;
  border-radius: 2px 2px 0 0;
  background: linear-gradient(#fafafa, #eee);
  white-space: nowrap;
}
.phasetabs button:nth-child(2) {
  width: 54px;
}
.phasetabs button:nth-child(4) {
  width: 48px;
}
.phasetabs button:nth-child(5) {
  width: 110px;
}
.phasetabs .active {
  width: 107px;
  height: 18px;
  font-weight: bold;
  background: #f4f4f4;
}
.chart {
  display: block;
  width: 100%;
}
.cyl {
  font: bold 9px 'Liberation Sans', sans-serif;
  fill: #fff;
  text-anchor: middle;
}
.axis {
  font: 9px 'Liberation Sans', sans-serif;
  fill: #222;
}
.end {
  text-anchor: end;
}
.mid {
  text-anchor: middle;
}
.rpm {
  fill: #400080;
}
.mark {
  font: bold 6px 'Liberation Sans', sans-serif;
  fill: #fff;
  text-anchor: middle;
}
.tick {
  stroke: #555;
}
.rtick {
  stroke: #400080;
}
.scrollrow {
  display: flex;
  height: 16px;
  gap: 1px;
  background: #f0f0f0;
  border-top: 1px solid #888;
  border-bottom: 1px solid #888;
}
.sb {
  width: 16px;
  display: flex;
  align-items: center;
  justify-content: center;
  border-right: 1px solid #999;
}
.sb svg {
  width: 12px;
  height: 12px;
}
.arrow {
  width: 14px;
}
.arrow svg {
  width: 8px;
  height: 8px;
}
.scrollrow output {
  width: 42px;
  line-height: 15px;
  text-align: center;
  border-right: 1px solid #888;
}
.track {
  flex: 1;
  border: 1px solid #c4c4c4;
}
.splitter {
  height: 12px;
  display: flex;
  align-items: center;
  justify-content: center;
  background: #f0f0f0;
}
.grip {
  width: 40%;
  height: 7px;
  display: flex;
  align-items: center;
  gap: 4px;
  padding: 0 4px;
  border: 1px solid #b0b0b0;
}
.grip span {
  flex: 1;
  height: 1px;
  background: repeating-linear-gradient(90deg, #1c84d4 0 2px, transparent 2px 3px);
}
.grip i {
  border: 3px solid transparent;
  border-top-color: #1c84d4;
  border-bottom: 0;
}
.results {
  background: #f0f0f0;
  padding: 0 2px 2px 0;
}
.results h2 {
  display: flex;
  gap: 3px;
  height: 9px;
  line-height: 9px;
}
.results h2::before,
.results h2::after {
  content: '';
  width: 5px;
  border-top: 1px solid #dadada;
  margin-top: 4px;
}
.results h2::after {
  flex: 1;
}
.resbody {
  display: flex;
}
.side {
  width: 24px;
  display: flex;
  flex-direction: column;
  align-items: center;
  gap: 6px;
  padding-top: 6px;
}
.side .x {
  width: 8px;
  height: 8px;
}
.results ul {
  flex: 1;
  height: 97px;
  padding: 0 3px 2px;
  display: grid;
  grid-auto-rows: 1fr;
  background: #fff;
  border: 1px solid #a0a0a0;
}
.results li {
  display: flex;
  align-items: center;
  gap: 3px;
}
.results li .ico {
  width: 13px;
}
.status {
  margin: 0;
  height: 16px;
  padding: 0 2px;
  line-height: 14px;
  background: #f0f0f0;
  border: 1px solid #cfcfcf;
  white-space: nowrap;
  overflow: hidden;
}
.taskbar {
  display: flex;
  height: 34px;
  background: #cbdfe5;
}
.taskbar button {
  display: flex;
  align-items: center;
  justify-content: center;
}
.tb {
  width: 34px;
  margin-right: 8px;
}
.plain {
  width: 41px;
  margin: 0;
}
.plain + .run {
  margin-left: 5px;
}
.run {
  border-bottom: 2px solid #28b4c8;
}
.taskbar .current {
  width: 41px;
  margin-left: -4px;
  background: #e8f1f4;
}
.s14 {
  width: 14px;
  height: 14px;
}
.s20 {
  width: 20px;
  height: 20px;
}
.fold {
  width: 20px;
  height: 18px;
}
.tray {
  flex: 1;
  display: flex;
  align-items: center;
  justify-content: flex-end;
  gap: 6px;
}
.tray svg {
  width: 14px;
  height: 14px;
}
.lang,
.clock {
  font: 10px/14px 'Open Sans', 'Noto Sans', sans-serif;
}
.lang {
  width: 38px;
  line-height: 34px;
  text-align: center;
}
.clock {
  width: 50px;
  display: flex;
  flex-direction: column;
  justify-content: center;
  align-items: center;
}
.note {
  width: 44px;
  margin-right: 4px;
  border-right: 1px solid #b4c8d0;
}
</style>
